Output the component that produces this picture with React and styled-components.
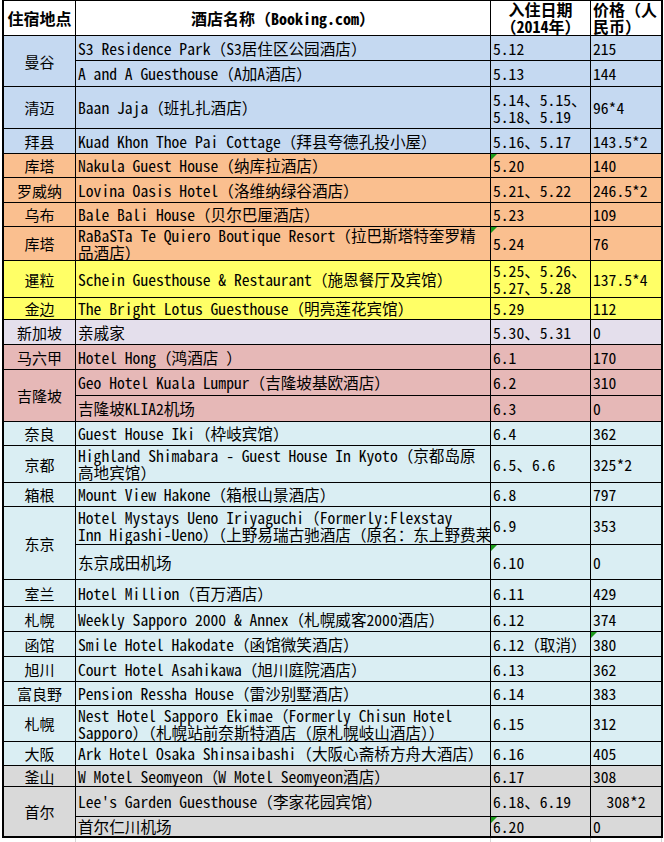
import React from "react";
import styled, { createGlobalStyle } from "styled-components";

const MONO = `"Noto Sans Mono CJK SC", "Noto Sans CJK SC", "Liberation Mono", monospace`;
const SANS = `"Noto Sans CJK SC", "Noto Sans", sans-serif`;

const BLUE = "#c5d9f1";
const ORANGE = "#fabf8f";
const YELLOW = "#ffff66";
const LAVENDER = "#e4dfec";
const PINK = "#e6b8b7";
const CYAN = "#daeef3";
const GRAY = "#d9d9d9";

const GlobalStyle = createGlobalStyle`
  html, body {
    margin: 0;
    padding: 0;
    background: #ffffff;
  }
  body {
    font-family: ${SANS};
    color: #000000;
  }
`;

const Page = styled.div`
  padding-left: 2px;
`;

const Sheet = styled.div`
  width: max-content;
  display: grid;
  grid-template-columns: 72px 415px 100px 71px;
  grid-template-rows: ${(p) => p.$rows};
  border-left: 2px solid #000;
  border-top: 1px solid #000;
  border-right: 1px solid #000;
  border-bottom: 1px solid #000;
`;

const Cell = styled.div`
  position: relative;
  box-sizing: border-box;
  border-right: 1px solid #000;
  border-bottom: 1px solid #000;
  background: ${(p) => p.$bg || "#ffffff"};
  display: flex;
  align-items: center;
  justify-content: ${(p) => p.$align || "flex-start"};
  padding: 0 ${(p) => (p.$align === "center" ? 0 : 2)}px;
  overflow: hidden;
  white-space: nowrap;
  font-family: ${MONO};
  font-size: 15.6px;
  line-height: 17px;

  &::before {
    content: "";
    display: ${(p) => (p.$flag ? "block" : "none")};
    position: absolute;
    top: 0;
    left: 0;
    border-top: 6px solid #1a9a1a;
    border-right: 6px solid transparent;
  }
`;

const PlaceCell = styled(Cell)`
  grid-column: 1;
  grid-row: span ${(p) => p.$span};
  justify-content: center;
  font-family: ${SANS};
  font-size: 15px;
`;

const HeadCell = styled(Cell)`
  font-family: ${MONO};
  font-weight: 700;
  font-size: 16px;
  line-height: 17px;
`;

const Text = styled.span`
  display: block;
  text-align: ${(p) => (p.$center ? "center" : "left")};
`;

const Tail = styled.div`
  margin-left: 2px;
  display: grid;
  grid-template-columns: 72px 415px 100px 71px;
  height: 5px;
`;

const TailCell = styled.div`
  border-right: 1px solid #d4d4d4;
`;

const groups = [
  { place: "曼谷", bg: BLUE, rows: [
    { h: 25, name: "S3 Residence Park（S3居住区公园酒店）", date: "5.12", price: "215" },
    { h: 26, name: "A and A Guesthouse（A加A酒店）", date: "5.13", price: "144" },
  ] },
  { place: "清迈", bg: BLUE, rows: [
    { h: 42, name: "Baan Jaja（班扎扎酒店）", date: "5.14、5.15、\n5.18、5.19", price: "96*4" },
  ] },
  { place: "拜县", bg: BLUE, rows: [
    { h: 25, name: "Kuad Khon Thoe Pai Cottage（拜县夸德孔投小屋）", date: "5.16、5.17", price: "143.5*2" },
  ] },
  { place: "库塔", bg: ORANGE, rows: [
    { h: 24, name: "Nakula Guest House（纳库拉酒店）", date: "5.20", price: "140", flagDate: true },
  ] },
  { place: "罗威纳", bg: ORANGE, rows: [
    { h: 25, name: "Lovina Oasis Hotel（洛维纳绿谷酒店）", date: "5.21、5.22", price: "246.5*2" },
  ] },
  { place: "乌布", bg: ORANGE, rows: [
    { h: 24, name: "Bale Bali House（贝尔巴厘酒店）", date: "5.23", price: "109" },
  ] },
  { place: "库塔", bg: ORANGE, rows: [
    { h: 34, name: "RaBaSTa Te Quiero Boutique Resort（拉巴斯塔特奎罗精\n品酒店）", date: "5.24", price: "76", flagDate: true },
  ] },
  { place: "暹粒", bg: YELLOW, rows: [
    { h: 37, name: "Schein Guesthouse & Restaurant（施恩餐厅及宾馆）", date: "5.25、5.26、\n5.27、5.28", price: "137.5*4" },
  ] },
  { place: "金边", bg: YELLOW, rows: [
    { h: 22, name: "The Bright Lotus Guesthouse（明亮莲花宾馆）", date: "5.29", price: "112" },
  ] },
  { place: "新加坡", bg: LAVENDER, rows: [
    { h: 25, name: "亲戚家", date: "5.30、5.31", price: "0" },
  ] },
  { place: "马六甲", bg: PINK, rows: [
    { h: 25, name: "Hotel Hong（鸿酒店 ）", date: "6.1", price: "170" },
  ] },
  { place: "吉隆坡", bg: PINK, rows: [
    { h: 26, name: "Geo Hotel Kuala Lumpur（吉隆坡基欧酒店）", date: "6.2", price: "310" },
    { h: 26, name: "吉隆坡KLIA2机场", date: "6.3", price: "0" },
  ] },
  { place: "奈良", bg: CYAN, rows: [
    { h: 24, name: "Guest House Iki（枠岐宾馆）", date: "6.4", price: "362" },
  ] },
  { place: "京都", bg: CYAN, rows: [
    { h: 37, name: "Highland Shimabara - Guest House In Kyoto（京都岛原\n高地宾馆）", date: "6.5、6.6", price: "325*2" },
  ] },
  { place: "箱根", bg: CYAN, rows: [
    { h: 24, name: "Mount View Hakone（箱根山景酒店）", date: "6.8", price: "797" },
  ] },
  { place: "东京", bg: CYAN, rows: [
    { h: 38, name: "Hotel Mystays Ueno Iriyaguchi（Formerly:Flexstay\nInn Higashi-Ueno）（上野易瑞古驰酒店（原名：东上野费莱", date: "6.9", price: "353" },
    { h: 35, name: "东京成田机场", date: "6.10", price: "0", flagDate: true },
  ] },
  { place: "室兰", bg: CYAN, rows: [
    { h: 27, name: "Hotel Million（百万酒店）", date: "6.11", price: "429" },
  ] },
  { place: "札幌", bg: CYAN, rows: [
    { h: 25, name: "Weekly Sapporo 2000 & Annex（札幌威客2000酒店）", date: "6.12", price: "374" },
  ] },
  { place: "函馆", bg: CYAN, rows: [
    { h: 25, name: "Smile Hotel Hakodate（函馆微笑酒店）", date: "6.12（取消）", price: "380", flagPrice: true },
  ] },
  { place: "旭川", bg: CYAN, rows: [
    { h: 25, name: "Court Hotel Asahikawa（旭川庭院酒店）", date: "6.13", price: "362" },
  ] },
  { place: "富良野", bg: CYAN, rows: [
    { h: 24, name: "Pension Ressha House（雷沙别墅酒店）", date: "6.14", price: "383" },
  ] },
  { place: "札幌", bg: CYAN, rows: [
    { h: 36, name: "Nest Hotel Sapporo Ekimae（Formerly Chisun Hotel\nSapporo）（札幌站前奈斯特酒店（原札幌岐山酒店））", date: "6.15", price: "312" },
  ] },
  { place: "大阪", bg: CYAN, rows: [
    { h: 24, name: "Ark Hotel Osaka Shinsaibashi（大阪心斋桥方舟大酒店）", date: "6.16", price: "405" },
  ] },
  { place: "釜山", bg: GRAY, rows: [
    { h: 21, name: "W Motel Seomyeon（W Motel Seomyeon酒店）", date: "6.17", price: "308" },
  ] },
  { place: "首尔", bg: GRAY, rows: [
    { h: 30, name: "Lee's Garden Guesthouse（李家花园宾馆）", date: "6.18、6.19", price: "308*2", centerPrice: true },
    { h: 20, name: "首尔仁川机场", date: "6.20", price: "0", flagDate: true },
  ] },
];

const lines = (s) =>
  s.split("\n").map((part, i) => (
    <React.Fragment key={i}>
      {i > 0 && <br />}
      {part}
    </React.Fragment>
  ));

const App = () => {
  const heights = [35];
  groups.forEach((g) => g.rows.forEach((r) => heights.push(r.h)));
  const template = heights.map((h) => `${h}px`).join(" ");

  return (
    <Page>
      <GlobalStyle />
      <Sheet $rows={template}>
        <HeadCell $align="center">住宿地点</HeadCell>
        <HeadCell $align="center">酒店名称（Booking.com）</HeadCell>
        <HeadCell $align="center">
          <Text $center>
            入住日期
            <br />
            （2014年）
          </Text>
        </HeadCell>
        <HeadCell>
          <Text>
            价格（人
            <br />
            民币）
          </Text>
        </HeadCell>

        {groups.map((g, gi) => (
          <React.Fragment key={gi}>
            <PlaceCell $span={g.rows.length} $bg={g.bg}>
              {g.place}
            </PlaceCell>
            {g.rows.map((r, ri) => (
              <React.Fragment key={ri}>
                <Cell $bg={g.bg}>
                  <Text>{lines(r.name)}</Text>
                </Cell>
                <Cell $bg={g.bg} $flag={r.flagDate}>
                  <Text>{lines(r.date)}</Text>
                </Cell>
                <Cell
                  $bg={g.bg}
                  $flag={r.flagPrice}
                  $align={r.centerPrice ? "center" : undefined}
                >
                  <Text>{r.price}</Text>
                </Cell>
              </React.Fragment>
            ))}
          </React.Fragment>
        ))}
      </Sheet>
      <Tail>
        <TailCell />
        <TailCell />
        <TailCell />
        <TailCell />
      </Tail>
    </Page>
  );
};

export default App;
